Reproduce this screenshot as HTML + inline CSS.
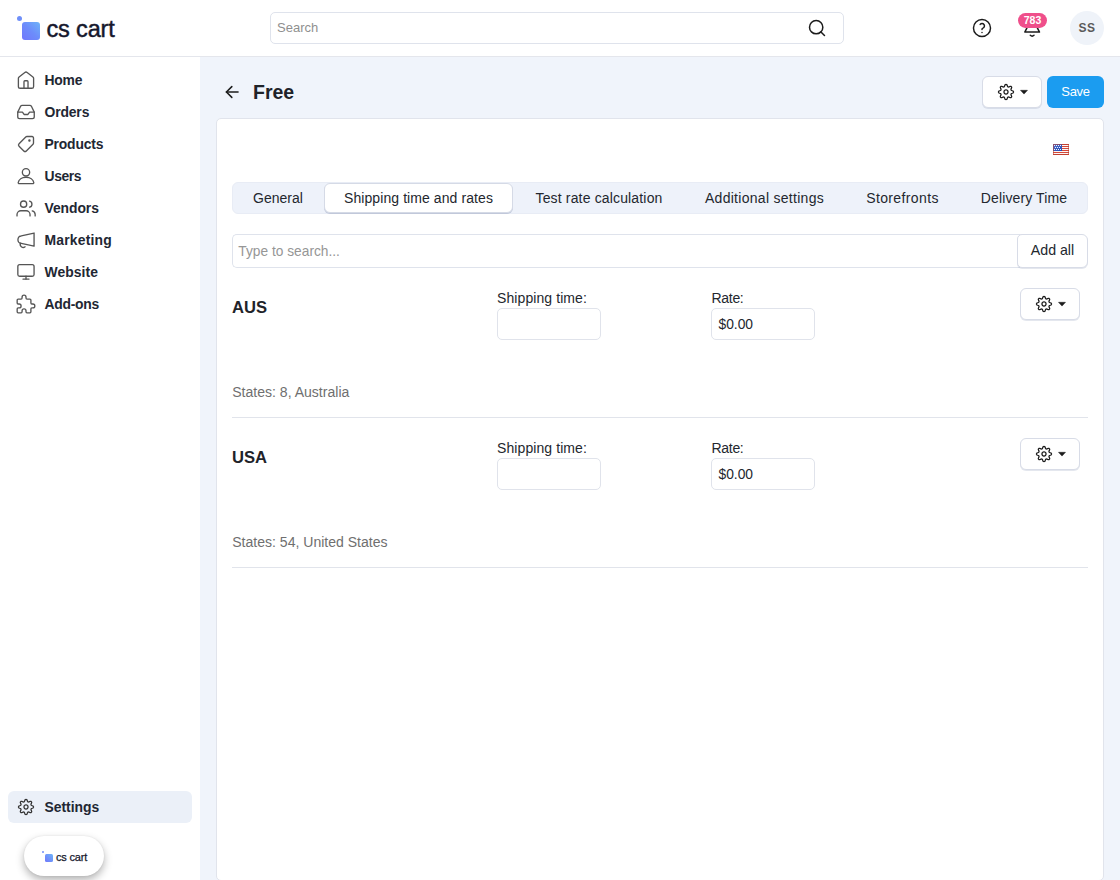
<!DOCTYPE html>
<html lang="en">
<head>
<meta charset="utf-8">
<title>Free - Shipping methods</title>
<style>
*{box-sizing:border-box;margin:0;padding:0}
html,body{width:1120px;height:880px;overflow:hidden}
body{position:relative;background:#f0f4fb;font-family:"Liberation Sans",sans-serif;font-size:14px;color:#1f2329;-webkit-font-smoothing:antialiased}
.abs{position:absolute}
.t{position:absolute;white-space:nowrap;line-height:1}
svg{display:block;overflow:visible}
.ico{position:absolute;fill:none;stroke:#555;stroke-width:1.45;stroke-linecap:round;stroke-linejoin:round}
.dk{stroke:#1c1c1c}

/* header */
#header{left:0;top:0;width:1120px;height:57px;background:#fff;border-bottom:1px solid #e4e6ec}
#sidebar{left:0;top:57px;width:200px;height:823px;background:#fff}
#logo-sq{left:22px;top:22px;width:18px;height:18px;border-radius:3px;background:linear-gradient(45deg,#7077fb 0%,#6d8cfb 50%,#6eb4f8 100%)}
#logo-dot{left:17px;top:16.1px;width:5px;height:5px;border-radius:50%;background:#6f8ff9}
#logo-tx{left:46.5px;top:15.1px;font-size:23.5px;letter-spacing:-0.15px;color:#16182d;line-height:28px;-webkit-text-stroke:.45px #16182d}
#search{left:270px;top:12px;width:574px;height:32px;border:1px solid #dfe3ec;border-radius:5px;background:#fff}
#search-tx{left:277px;top:21px;font-size:13px;color:#8f8f8f}
#badge{left:1018px;top:13px;width:29px;height:14.7px;border-radius:7.4px;background:#ef4f8b;color:#fff;font-weight:bold;font-size:10.5px;text-align:center;line-height:14.7px}
#avatar{left:1070px;top:11px;width:34px;height:34px;border-radius:50%;background:#eff3f9;color:#5a5a5a;font-weight:bold;font-size:12px;text-align:center;line-height:34px;letter-spacing:.4px}

/* menu */
.mi{left:44.5px;font-weight:bold;font-size:13.9px;color:#222733;margin-top:1px}
#set-bg{left:8px;top:791px;width:184px;height:32px;border-radius:6px;background:#ebf0f8}
#pill{left:24px;top:836px;width:80px;height:40px;border-radius:20px;background:#fff;box-shadow:0 4px 9px rgba(0,0,0,.3),0 0 2px rgba(0,0,0,.08)}
#pill-sq{left:44.5px;top:853.5px;width:8px;height:8px;border-radius:1.5px;background:linear-gradient(45deg,#7077fb,#6eb4f8)}
#pill-dot{left:42px;top:851px;width:2.4px;height:2.4px;border-radius:50%;background:#6f8ff9}
#pill-tx{left:56px;top:851px;font-size:11px;letter-spacing:-.2px;color:#16182d;line-height:13px;-webkit-text-stroke:.25px #16182d}

/* page */
#title{left:253px;top:82px;font-size:19.5px;font-weight:bold;color:#1f2329;line-height:20px}
.btn{background:#fff;border:1px solid #d8dce7;border-radius:6px;box-shadow:0 1px 0 rgba(120,135,170,.2)}
#save{left:1047px;top:76px;width:57px;height:32px;border-radius:6px;background:#1b9cf0;color:#fff;font-size:13px;letter-spacing:-.3px;text-align:center;line-height:32px}
#card{left:216px;top:118px;width:888px;height:763px;background:#fff;border:1px solid #e1e4ec;border-radius:5px}
#tabs{left:232px;top:182px;width:856px;height:31.5px;border-radius:6px;background:#eef2fa;border:1px solid #e8ecf5}
#tab-act{left:324px;top:182.5px;width:189px;height:30.5px;border-radius:6px;background:#fff;border:1px solid #d5dae6;box-shadow:0 1px 0 rgba(120,135,170,.35)}
.tab{top:190px;font-size:14px;color:#23272e;text-align:center;line-height:16px}
#zs{left:232px;top:234px;width:790px;height:34px;border:1px solid #dfe3ec;border-right:none;border-radius:5px 0 0 5px;background:#fff}
#zs-tx{left:238.3px;top:243.6px;font-size:13.75px;color:#969696;line-height:16px}
#addall{left:1017px;top:234px;width:71px;height:34px;border-radius:5px 6px 6px 5px;font-size:14.2px;text-align:center;line-height:30.6px;color:#23272e}
.h{left:232px;font-size:16.6px;font-weight:bold;color:#1f2329;line-height:18px}
.lb{font-size:14px;color:#23272e;line-height:16px}
.inp{width:104px;height:32px;border:1px solid #e0e3eb;border-radius:5px;background:#fff}
.val{font-size:13.8px;color:#23272e;line-height:16px}
.st{left:232.2px;font-size:14.05px;color:#6f6f6f;line-height:16px}
.hr{left:232px;width:856px;height:1px;background:#e1e4eb}
.gbtn{width:60px;height:32px}
.caret{width:0;height:0;border-left:3.7px solid transparent;border-right:3.7px solid transparent;border-top:4px solid #1c1c1c}
</style>
</head>
<body>

<div id="header" class="abs"></div>
<div id="sidebar" class="abs"></div>

<!-- logo -->
<div id="logo-dot" class="abs"></div>
<div id="logo-sq" class="abs"></div>
<div id="logo-tx" class="t">cs cart</div>

<!-- top search -->
<div id="search" class="abs"></div>
<div id="search-tx" class="t">Search</div>
<svg class="ico dk" style="left:807px;top:18px;stroke-width:1.8" width="20" height="20" viewBox="0 0 24 24"><circle cx="11" cy="11" r="8"/><path d="M21 21l-4.3-4.3"/></svg>

<!-- help -->
<svg class="ico dk" style="left:971px;top:17px;stroke-width:1.6" width="22" height="22" viewBox="0 0 24 24"><circle cx="12" cy="12" r="9.3"/><path d="M12 17v.01"/><path d="M12 13.6a1.5 1.5 0 0 1 1-1.5 2.6 2.6 0 1 0-3-4"/></svg>
<!-- bell -->
<svg class="ico dk" style="left:1020px;top:12px;stroke-width:1.5" width="24" height="28" viewBox="1020 12 24 28"><path d="M1024.8 32.1 1027.2 27.3V23.5a4.95 4.95 0 0 1 9.9 0v3.8l2.4 4.8z"/><path d="M1030.3 35.3q1.85 1.7 3.7 0"/></svg>
<div id="badge" class="abs">783</div>
<div id="avatar" class="abs">SS</div>

<!-- menu icons -->
<svg class="ico" style="left:14.8px;top:69px" width="22" height="22" viewBox="0 0 24 24"><path d="M3.7 10.2a2 2 0 0 1 .75-1.56l6.3-4.9a2 2 0 0 1 2.5 0l6.3 4.9a2 2 0 0 1 .75 1.56V19a2 2 0 0 1-2 2H5.7a2 2 0 0 1-2-2z"/><path d="M9.8 20.9v-7.1a1 1 0 0 1 1-1h2.4a1 1 0 0 1 1 1v7.1"/></svg>
<svg class="ico" style="left:15px;top:101px" width="22" height="22" viewBox="0 0 24 24"><path d="M21 12.1h-5.1l-1.8 2.6h-4.2l-1.8-2.6H3"/><path d="M6.1 5.8 3 12.1v5.2a2 2 0 0 0 2 2h14a2 2 0 0 0 2-2v-5.2l-3.1-6.3a2 2 0 0 0-1.8-1.1H7.9a2 2 0 0 0-1.8 1.1z"/></svg>
<svg class="ico" style="left:15px;top:133px" width="22" height="22" viewBox="0 0 24 24"><g transform="translate(12 12) scale(-.89 .89) translate(-12 -12)" stroke-width="1.63"><path d="M12.3 3.4a2 2 0 0 0-1.4-.6H4.6a1.8 1.8 0 0 0-1.8 1.8v6.3a2 2 0 0 0 .6 1.4l8.2 8.2a2.2 2.2 0 0 0 3.1 0l5.8-5.8a2.2 2.2 0 0 0 0-3.1z"/><circle cx="7.8" cy="7.8" r=".7" fill="#555"/></g></svg>
<svg class="ico" style="left:14.6px;top:165px" width="22" height="22" viewBox="0 0 24 24"><circle cx="12" cy="8" r="4"/><path d="M4.6 20.4a1.1 1.1 0 0 1-1.1-1.2C4 15.7 7.6 13.4 12 13.4s8 2.3 8.5 5.8a1.1 1.1 0 0 1-1.1 1.2z"/></svg>
<svg class="ico" style="left:15px;top:197px" width="22" height="22" viewBox="0 0 24 24"><path d="M2.2 20.6v-1.4a4.2 4.2 0 0 1 4.2-4.2h5.8a4.2 4.2 0 0 1 4.2 4.2v1.4"/><circle cx="9.4" cy="7.8" r="3.4"/><path d="M22 20.6v-1.4a4.2 4.2 0 0 0-3.2-4"/><path d="M15.9 4.5a3.4 3.4 0 0 1 0 6.6"/></svg>
<svg class="ico" style="left:15px;top:229px" width="22" height="22" viewBox="0 0 24 24"><path d="M20.8 4.4v14.3L6.8 15.6a3.6 4 0 0 1 0-8z"/><path d="M6 15.4a3.3 3.3 0 0 0 5 4"/></svg>
<svg class="ico" style="left:15px;top:261px" width="22" height="22" viewBox="0 0 24 24"><rect x="3.1" y="4" width="17.7" height="12.6" rx="2"/><path d="M8.7 19.7h6.6"/><path d="M12 16.6v3.1"/></svg>
<svg class="ico" style="left:15px;top:293px" width="22" height="22" viewBox="0 0 24 24"><g transform="translate(12 12) scale(1.07) translate(-12 -12)" stroke-width="1.36"><path d="M4 7h3a1 1 0 0 0 1-1v-1a2 2 0 0 1 4 0v1a1 1 0 0 0 1 1h3a1 1 0 0 1 1 1v3a1 1 0 0 0 1 1h1a2 2 0 0 1 0 4h-1a1 1 0 0 0-1 1v3a1 1 0 0 1-1 1h-3a1 1 0 0 1-1-1v-1a2 2 0 0 0-4 0v1a1 1 0 0 1-1 1h-3a1 1 0 0 1-1-1v-3a1 1 0 0 1 1-1h1a2 2 0 0 0 0-4h-1a1 1 0 0 1-1-1v-3a1 1 0 0 1 1-1"/></g></svg>

<div class="t mi" style="top:73px;letter-spacing:-0.2px">Home</div>
<div class="t mi" style="top:105px;letter-spacing:-0.14px">Orders</div>
<div class="t mi" style="top:137px;letter-spacing:-0.19px">Products</div>
<div class="t mi" style="top:169px;letter-spacing:-0.4px">Users</div>
<div class="t mi" style="top:201px;letter-spacing:-0.07px">Vendors</div>
<div class="t mi" style="top:233px;letter-spacing:0.2px">Marketing</div>
<div class="t mi" style="top:265px;letter-spacing:0.06px">Website</div>
<div class="t mi" style="top:297px;letter-spacing:-0.26px">Add-ons</div>

<div id="set-bg" class="abs"></div>
<svg class="ico" style="left:16.05px;top:796.8px;stroke:#333;stroke-width:1.25" width="20" height="20" viewBox="-10 -10 20 20"><path d="M0.00 -7.55 0.49 -7.45 0.94 -7.13 1.27 -6.38 1.50 -5.61 1.78 -5.24 2.09 -5.04 2.45 -4.97 2.90 -5.03 3.61 -5.40 4.38 -5.71 4.92 -5.61 5.34 -5.34 5.61 -4.92 5.71 -4.38 5.40 -3.61 5.03 -2.90 4.97 -2.45 5.04 -2.09 5.24 -1.78 5.61 -1.50 6.38 -1.27 7.13 -0.94 7.45 -0.49 7.55 -0.00 7.45 0.49 7.13 0.94 6.38 1.27 5.61 1.50 5.24 1.78 5.04 2.09 4.97 2.45 5.03 2.90 5.40 3.61 5.71 4.38 5.61 4.92 5.34 5.34 4.92 5.61 4.38 5.71 3.61 5.40 2.90 5.03 2.45 4.97 2.09 5.04 1.78 5.24 1.50 5.61 1.27 6.38 0.94 7.13 0.49 7.45 0.00 7.55 -0.49 7.45 -0.94 7.13 -1.27 6.38 -1.50 5.61 -1.78 5.24 -2.09 5.04 -2.45 4.97 -2.90 5.03 -3.61 5.40 -4.38 5.71 -4.92 5.61 -5.34 5.34 -5.61 4.92 -5.71 4.38 -5.40 3.61 -5.03 2.90 -4.97 2.45 -5.04 2.09 -5.24 1.78 -5.61 1.50 -6.38 1.27 -7.13 0.94 -7.45 0.49 -7.55 0.00 -7.45 -0.49 -7.13 -0.94 -6.38 -1.27 -5.61 -1.50 -5.24 -1.78 -5.04 -2.09 -4.97 -2.45 -5.03 -2.90 -5.40 -3.61 -5.71 -4.38 -5.61 -4.92 -5.34 -5.34 -4.92 -5.61 -4.38 -5.71 -3.61 -5.40 -2.90 -5.03 -2.45 -4.97 -2.09 -5.04 -1.78 -5.24 -1.50 -5.61 -1.27 -6.38 -0.94 -7.13 -0.49 -7.45z"/><circle cx="0" cy="0" r="2.05"/></svg>
<div class="t mi" style="top:800px">Settings</div>

<div id="pill" class="abs"></div>
<div id="pill-dot" class="abs"></div>
<div id="pill-sq" class="abs"></div>
<div id="pill-tx" class="t">cs cart</div>

<!-- page title -->
<svg class="ico dk" style="left:221px;top:81px;stroke-width:1.7" width="22" height="22" viewBox="0 0 24 24"><path d="M11.8 17.9 5.9 12l5.9-5.9"/><path d="M18.6 12H5.9"/></svg>
<div id="title" class="t">Free</div>

<div class="abs btn gbtn" style="left:982.4px;top:76px;width:59.8px"></div>
<svg class="ico dk" style="left:995.9px;top:81.75px;stroke-width:1.25" width="20" height="20" viewBox="-10 -10 20 20"><path d="M0.00 -7.55 0.49 -7.45 0.94 -7.13 1.27 -6.38 1.50 -5.61 1.78 -5.24 2.09 -5.04 2.45 -4.97 2.90 -5.03 3.61 -5.40 4.38 -5.71 4.92 -5.61 5.34 -5.34 5.61 -4.92 5.71 -4.38 5.40 -3.61 5.03 -2.90 4.97 -2.45 5.04 -2.09 5.24 -1.78 5.61 -1.50 6.38 -1.27 7.13 -0.94 7.45 -0.49 7.55 -0.00 7.45 0.49 7.13 0.94 6.38 1.27 5.61 1.50 5.24 1.78 5.04 2.09 4.97 2.45 5.03 2.90 5.40 3.61 5.71 4.38 5.61 4.92 5.34 5.34 4.92 5.61 4.38 5.71 3.61 5.40 2.90 5.03 2.45 4.97 2.09 5.04 1.78 5.24 1.50 5.61 1.27 6.38 0.94 7.13 0.49 7.45 0.00 7.55 -0.49 7.45 -0.94 7.13 -1.27 6.38 -1.50 5.61 -1.78 5.24 -2.09 5.04 -2.45 4.97 -2.90 5.03 -3.61 5.40 -4.38 5.71 -4.92 5.61 -5.34 5.34 -5.61 4.92 -5.71 4.38 -5.40 3.61 -5.03 2.90 -4.97 2.45 -5.04 2.09 -5.24 1.78 -5.61 1.50 -6.38 1.27 -7.13 0.94 -7.45 0.49 -7.55 0.00 -7.45 -0.49 -7.13 -0.94 -6.38 -1.27 -5.61 -1.50 -5.24 -1.78 -5.04 -2.09 -4.97 -2.45 -5.03 -2.90 -5.40 -3.61 -5.71 -4.38 -5.61 -4.92 -5.34 -5.34 -4.92 -5.61 -4.38 -5.71 -3.61 -5.40 -2.90 -5.03 -2.45 -4.97 -2.09 -5.04 -1.78 -5.24 -1.50 -5.61 -1.27 -6.38 -0.94 -7.13 -0.49 -7.45z"/><circle cx="0" cy="0" r="2.05"/></svg>
<svg class="abs" style="left:1020.0px;top:89.7px" width="8" height="4.4" viewBox="0 0 8 4.4"><path d="M.5 .3h7L4 4.1z" fill="#1c1c1c" stroke="#1c1c1c" stroke-width=".5" stroke-linejoin="round"/></svg>
<div id="save" class="abs">Save</div>

<!-- card -->
<div id="card" class="abs"></div>

<!-- flag -->
<svg class="abs" style="left:1053px;top:144px" width="16" height="11" viewBox="0 0 16 11" shape-rendering="crispEdges">
<defs><linearGradient id="fg" x1="0" y1="0" x2="1" y2="1"><stop offset="0" stop-color="#5b76cf"/><stop offset="1" stop-color="#1d47b4"/></linearGradient></defs>
<rect width="16" height="11" fill="#fdf6f4"/>
<g fill="#d4483a"><rect y="0" width="16" height="1"/><rect y="2" width="16" height="1"/><rect y="4" width="16" height="1"/><rect y="6" width="16" height="1"/><rect y="8" width="16" height="1"/><rect y="10" width="16" height="1"/></g>
<rect width="9" height="7" fill="url(#fg)"/>
<g fill="#eef3ff"><rect x="1" y="1" width="1" height="1"/><rect x="3" y="1" width="1" height="1"/><rect x="5" y="1" width="1" height="1"/><rect x="7" y="1" width="1" height="1"/><rect x="2" y="3" width="1" height="1"/><rect x="4" y="3" width="1" height="1"/><rect x="6" y="3" width="1" height="1"/><rect x="1" y="5" width="1" height="1"/><rect x="3" y="5" width="1" height="1"/><rect x="5" y="5" width="1" height="1"/><rect x="7" y="5" width="1" height="1"/></g>
<rect x=".5" y=".5" width="15" height="10" fill="none" stroke="#b23a2a" stroke-opacity=".55" stroke-width="1"/>
</svg>

<!-- tabs -->
<div id="tabs" class="abs"></div>
<div id="tab-act" class="abs"></div>
<div class="t tab" style="left:232px;width:92px">General</div>
<div class="t tab" style="left:324px;width:189px;letter-spacing:0.08px">Shipping time and rates</div>
<div class="t tab" style="left:514px;width:170px;letter-spacing:0.157px">Test rate calculation</div>
<div class="t tab" style="left:684px;width:161px;letter-spacing:0.29px">Additional settings</div>
<div class="t tab" style="left:845px;width:115px;letter-spacing:0.37px">Storefronts</div>
<div class="t tab" style="left:960px;width:128px;letter-spacing:0.115px">Delivery Time</div>

<!-- zone search -->
<div id="zs" class="abs"></div>
<div id="zs-tx" class="t">Type to search...</div>
<div id="addall" class="abs btn">Add all</div>

<!-- row 1 -->
<div class="t h" style="top:299.4px">AUS</div>
<div class="t lb" style="left:497px;top:290px;letter-spacing:.09px">Shipping time:</div>
<div class="abs inp" style="left:497px;top:308px"></div>
<div class="t lb" style="left:711.5px;top:290px;letter-spacing:-.3px">Rate:</div>
<div class="abs inp" style="left:711px;top:308px"></div>
<div class="t val" style="left:718.5px;top:316.7px">$0.00</div>
<div class="abs btn gbtn" style="left:1020px;top:288px"></div>
<svg class="ico dk" style="left:1033.86px;top:293.86px;stroke-width:1.25" width="20" height="20" viewBox="-10 -10 20 20"><path d="M0.00 -7.55 0.49 -7.45 0.94 -7.13 1.27 -6.38 1.50 -5.61 1.78 -5.24 2.09 -5.04 2.45 -4.97 2.90 -5.03 3.61 -5.40 4.38 -5.71 4.92 -5.61 5.34 -5.34 5.61 -4.92 5.71 -4.38 5.40 -3.61 5.03 -2.90 4.97 -2.45 5.04 -2.09 5.24 -1.78 5.61 -1.50 6.38 -1.27 7.13 -0.94 7.45 -0.49 7.55 -0.00 7.45 0.49 7.13 0.94 6.38 1.27 5.61 1.50 5.24 1.78 5.04 2.09 4.97 2.45 5.03 2.90 5.40 3.61 5.71 4.38 5.61 4.92 5.34 5.34 4.92 5.61 4.38 5.71 3.61 5.40 2.90 5.03 2.45 4.97 2.09 5.04 1.78 5.24 1.50 5.61 1.27 6.38 0.94 7.13 0.49 7.45 0.00 7.55 -0.49 7.45 -0.94 7.13 -1.27 6.38 -1.50 5.61 -1.78 5.24 -2.09 5.04 -2.45 4.97 -2.90 5.03 -3.61 5.40 -4.38 5.71 -4.92 5.61 -5.34 5.34 -5.61 4.92 -5.71 4.38 -5.40 3.61 -5.03 2.90 -4.97 2.45 -5.04 2.09 -5.24 1.78 -5.61 1.50 -6.38 1.27 -7.13 0.94 -7.45 0.49 -7.55 0.00 -7.45 -0.49 -7.13 -0.94 -6.38 -1.27 -5.61 -1.50 -5.24 -1.78 -5.04 -2.09 -4.97 -2.45 -5.03 -2.90 -5.40 -3.61 -5.71 -4.38 -5.61 -4.92 -5.34 -5.34 -4.92 -5.61 -4.38 -5.71 -3.61 -5.40 -2.90 -5.03 -2.45 -4.97 -2.09 -5.04 -1.78 -5.24 -1.50 -5.61 -1.27 -6.38 -0.94 -7.13 -0.49 -7.45z"/><circle cx="0" cy="0" r="2.05"/></svg>
<svg class="abs" style="left:1058.0px;top:301.7px" width="8" height="4.4" viewBox="0 0 8 4.4"><path d="M.5 .3h7L4 4.1z" fill="#1c1c1c" stroke="#1c1c1c" stroke-width=".5" stroke-linejoin="round"/></svg>
<div class="t st" style="top:384px">States: 8, Australia</div>
<div class="abs hr" style="top:417px"></div>

<!-- row 2 -->
<div class="t h" style="top:449.4px">USA</div>
<div class="t lb" style="left:497px;top:440px;letter-spacing:.09px">Shipping time:</div>
<div class="abs inp" style="left:497px;top:458px"></div>
<div class="t lb" style="left:711.5px;top:440px;letter-spacing:-.3px">Rate:</div>
<div class="abs inp" style="left:711px;top:458px"></div>
<div class="t val" style="left:718.5px;top:466.7px">$0.00</div>
<div class="abs btn gbtn" style="left:1020px;top:438px"></div>
<svg class="ico dk" style="left:1033.86px;top:443.86px;stroke-width:1.25" width="20" height="20" viewBox="-10 -10 20 20"><path d="M0.00 -7.55 0.49 -7.45 0.94 -7.13 1.27 -6.38 1.50 -5.61 1.78 -5.24 2.09 -5.04 2.45 -4.97 2.90 -5.03 3.61 -5.40 4.38 -5.71 4.92 -5.61 5.34 -5.34 5.61 -4.92 5.71 -4.38 5.40 -3.61 5.03 -2.90 4.97 -2.45 5.04 -2.09 5.24 -1.78 5.61 -1.50 6.38 -1.27 7.13 -0.94 7.45 -0.49 7.55 -0.00 7.45 0.49 7.13 0.94 6.38 1.27 5.61 1.50 5.24 1.78 5.04 2.09 4.97 2.45 5.03 2.90 5.40 3.61 5.71 4.38 5.61 4.92 5.34 5.34 4.92 5.61 4.38 5.71 3.61 5.40 2.90 5.03 2.45 4.97 2.09 5.04 1.78 5.24 1.50 5.61 1.27 6.38 0.94 7.13 0.49 7.45 0.00 7.55 -0.49 7.45 -0.94 7.13 -1.27 6.38 -1.50 5.61 -1.78 5.24 -2.09 5.04 -2.45 4.97 -2.90 5.03 -3.61 5.40 -4.38 5.71 -4.92 5.61 -5.34 5.34 -5.61 4.92 -5.71 4.38 -5.40 3.61 -5.03 2.90 -4.97 2.45 -5.04 2.09 -5.24 1.78 -5.61 1.50 -6.38 1.27 -7.13 0.94 -7.45 0.49 -7.55 0.00 -7.45 -0.49 -7.13 -0.94 -6.38 -1.27 -5.61 -1.50 -5.24 -1.78 -5.04 -2.09 -4.97 -2.45 -5.03 -2.90 -5.40 -3.61 -5.71 -4.38 -5.61 -4.92 -5.34 -5.34 -4.92 -5.61 -4.38 -5.71 -3.61 -5.40 -2.90 -5.03 -2.45 -4.97 -2.09 -5.04 -1.78 -5.24 -1.50 -5.61 -1.27 -6.38 -0.94 -7.13 -0.49 -7.45z"/><circle cx="0" cy="0" r="2.05"/></svg>
<svg class="abs" style="left:1058.0px;top:451.7px" width="8" height="4.4" viewBox="0 0 8 4.4"><path d="M.5 .3h7L4 4.1z" fill="#1c1c1c" stroke="#1c1c1c" stroke-width=".5" stroke-linejoin="round"/></svg>
<div class="t st" style="top:534px">States: 54, United States</div>
<div class="abs hr" style="top:567px"></div>

</body>
</html>
